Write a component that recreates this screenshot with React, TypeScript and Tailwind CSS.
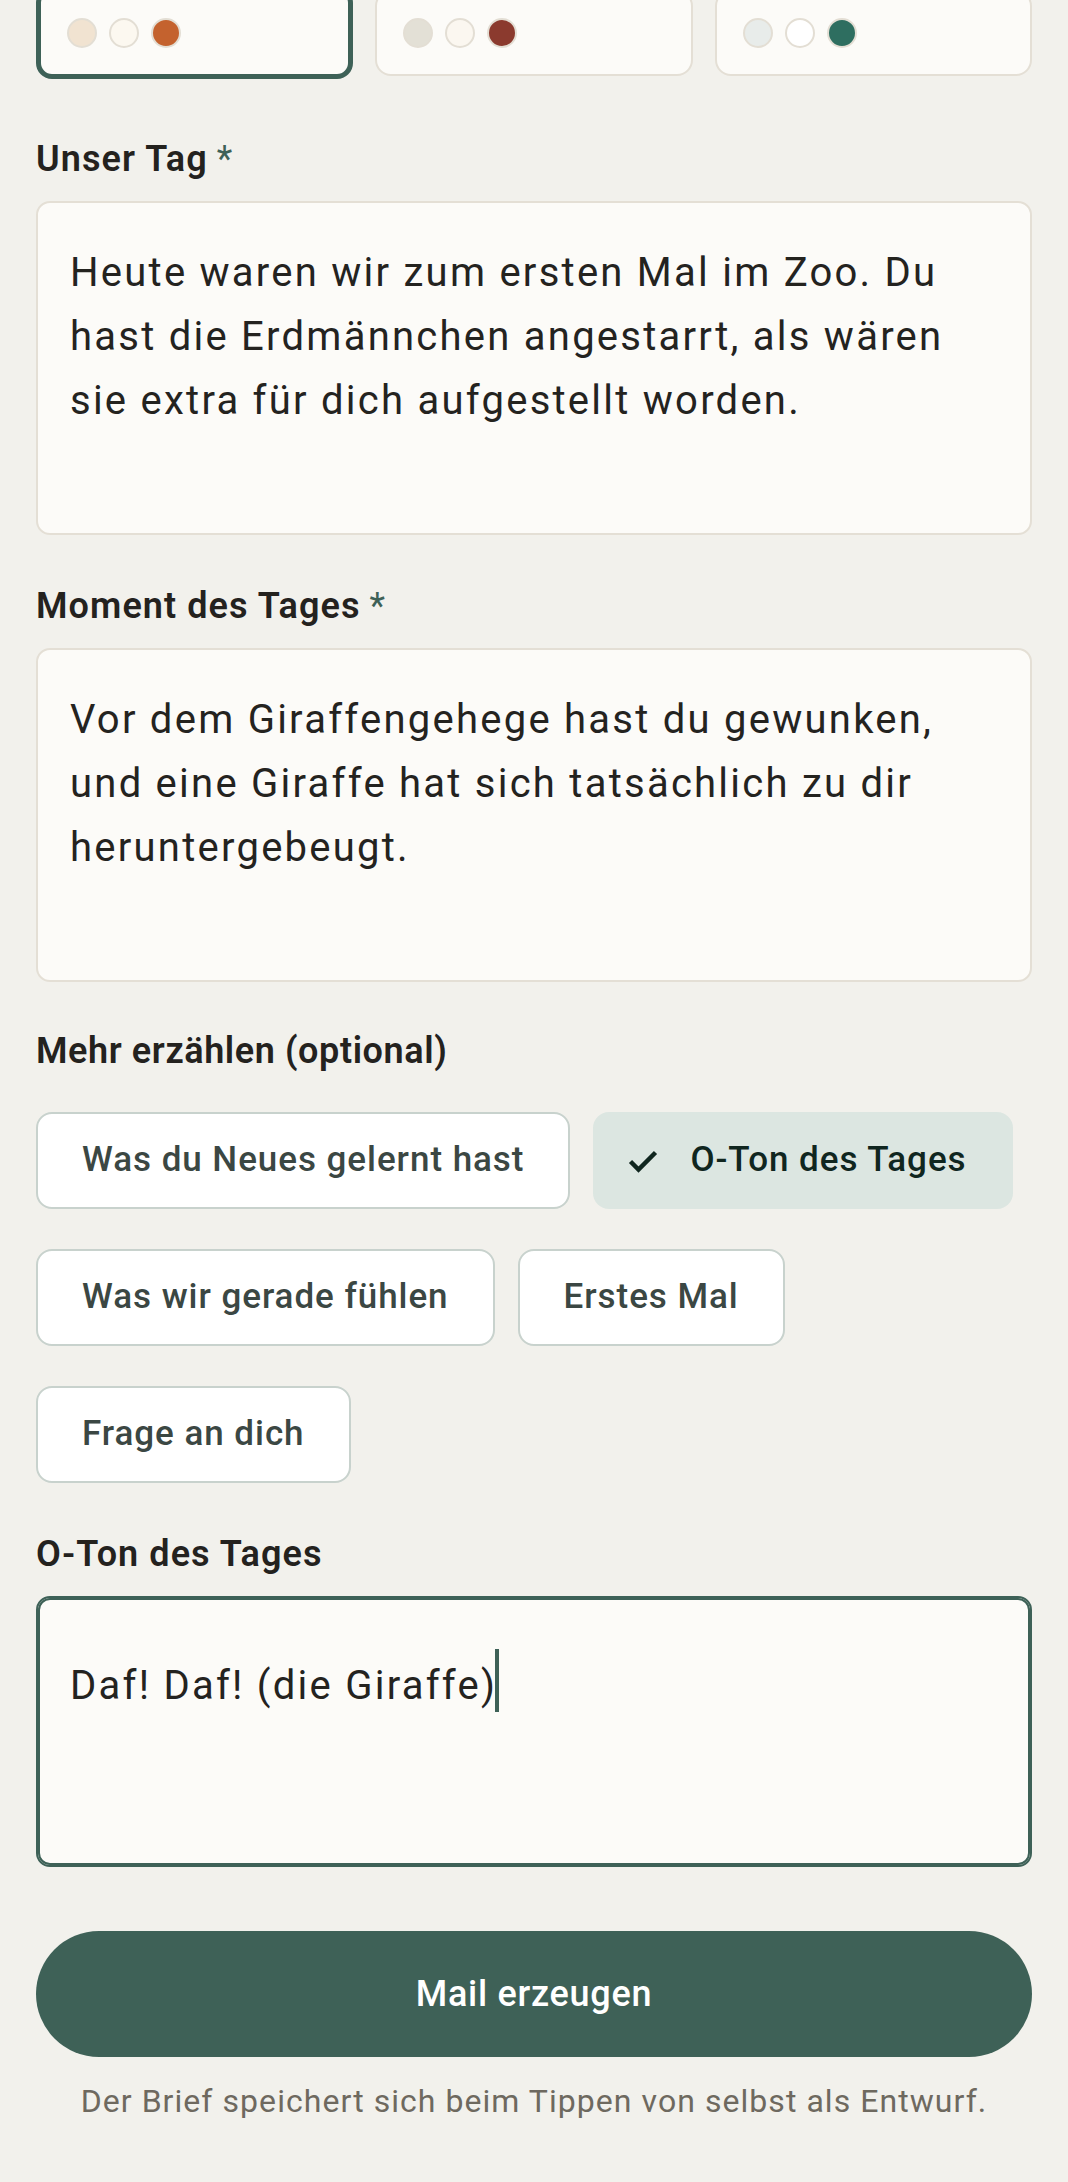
import clsx from 'clsx'

// ── Data ──────────────────────────────────────────────────────────────────────

interface Theme {
  id: string
  swatches: [string, string, string]
}

const THEMES: Theme[] = [
  { id: 'warm', swatches: ['bg-[#f1e3d1]', 'bg-[#fcf8f0]', 'bg-[#c4622e]'] },
  { id: 'brick', swatches: ['bg-[#e3e0d6]', 'bg-[#fbf7f0]', 'bg-[#8b3a2e]'] },
  { id: 'forest', swatches: ['bg-[#e8ecea]', 'bg-[#ffffff]', 'bg-[#2e6e60]'] },
]

const PROMPTS = [
  { id: 'learned', label: 'Was du Neues gelernt hast' },
  { id: 'quote', label: 'O-Ton des Tages' },
  { id: 'feel', label: 'Was wir gerade fühlen' },
  { id: 'first', label: 'Erstes Mal' },
  { id: 'question', label: 'Frage an dich' },
]

const ACTIVE_PROMPTS = ['quote']

// ── Bits ──────────────────────────────────────────────────────────────────────

function CheckIcon() {
  return (
    <svg width="30" height="24" viewBox="0 0 30 24" className="shrink-0" fill="none">
      <path d="M2.5 12.5 10.5 20.5 27.5 3.5" stroke="#10261f" strokeWidth="4.5" />
    </svg>
  )
}

function FieldLabel({ children, required }: { children: string; required?: boolean }) {
  return (
    <div className="mb-[21px] text-[36px] leading-[42px] font-semibold tracking-[0.03em] text-[#24221e]">
      {children}
      {required && <span className="ml-[9px] font-normal text-[#3e6157]">*</span>}
    </div>
  )
}

const boxText =
  'w-full rounded-[14px] bg-[#fcfbf8] px-[32px] pt-[38px] text-[40px] leading-[64px] tracking-[2.25px] text-[#24231f] whitespace-pre-line'

// ── Page ──────────────────────────────────────────────────────────────────────

export default function App() {
  const selectedTheme = 'warm'

  return (
    <div className="min-h-screen bg-[#f2f1ec] font-['Roboto','Liberation_Sans',sans-serif] overflow-hidden">
      <div className="px-9 pb-[60px]">
        {/* Theme cards (scrolled partly out of view) */}
        <div className="-mt-[13px] grid grid-cols-3 items-center gap-[22px]">
          {THEMES.map((theme) => (
            <div
              key={theme.id}
              className={clsx(
                'flex gap-[12px] rounded-[16px] bg-[#fcfbf8] p-[26px]',
                theme.id === selectedTheme
                  ? 'border-[5px] border-[#3e6157]'
                  : 'border-2 border-[#e4dfd5]'
              )}
            >
              {theme.swatches.map((sw) => (
                <span key={sw} className={clsx('h-[30px] w-[30px] rounded-full border-2 border-[#e3ded4]', sw)} />
              ))}
            </div>
          ))}
        </div>

        {/* Unser Tag */}
        <div className="mt-[59px]">
          <FieldLabel required>Unser Tag</FieldLabel>
          <div className={clsx(boxText, 'h-[334px] border-2 border-[#e4dfd5]')}>
            {'Heute waren wir zum ersten Mal im Zoo. Du\nhast die Erdmännchen angestarrt, als wären\nsie extra für dich aufgestellt worden.'}
          </div>
        </div>

        {/* Moment des Tages */}
        <div className="mt-[50px]">
          <FieldLabel required>Moment des Tages</FieldLabel>
          <div className={clsx(boxText, 'h-[334px] border-2 border-[#e4dfd5]')}>
            {'Vor dem Giraffengehege hast du gewunken,\nund eine Giraffe hat sich tatsächlich zu dir\nheruntergebeugt.'}
          </div>
        </div>

        {/* Optional prompts */}
        <div className="mt-[48px]">
          <div className="text-[36px] leading-[42px] font-semibold tracking-[0.6px] text-[#24221e]">
            Mehr erzählen (optional)
          </div>
          <div className="mt-[40px] flex flex-wrap gap-x-[23px] gap-y-[40px]">
            {PROMPTS.map((p) => {
              const active = ACTIVE_PROMPTS.includes(p.id)
              return (
                <button
                  key={p.id}
                  className={clsx(
                    'flex h-[97px] items-center rounded-[16px] border-2 text-[35px] font-medium tracking-[0.95px]',
                    active
                      ? 'gap-[32px] border-transparent bg-[#dce6e1] pl-[33px] pr-[44px] text-[#10261f]'
                      : 'border-[#c8d2cd] bg-white px-[44px] text-[#3b4743]'
                  )}
                >
                  {active && <CheckIcon />}
                  {p.label}
                </button>
              )
            })}
          </div>
        </div>

        {/* O-Ton (focused) */}
        <div className="mt-[50px]">
          <FieldLabel>O-Ton des Tages</FieldLabel>
          <div
            className={clsx(
              boxText,
              'h-[271px] border-2 border-[#3e6157] shadow-[inset_0_0_0_2px_#3e6157]'
            )}
          >
            Daf! Daf! (die Giraffe)
            <span className="-ml-[2px] inline-block h-[63px] w-[4px] translate-y-[13px] bg-[#3e6157] align-baseline" />
          </div>
        </div>

        <button className="mt-[64px] h-[126px] w-full rounded-full bg-[#3e6157] text-[36px] font-medium tracking-[0.02em] text-white">
          Mail erzeugen
        </button>

        <p className="mt-[22px] text-center text-[32px] leading-[44px] tracking-[1.05px] text-[#6e695f]">
          Der Brief speichert sich beim Tippen von selbst als Entwurf.
        </p>
      </div>
    </div>
  )
}
